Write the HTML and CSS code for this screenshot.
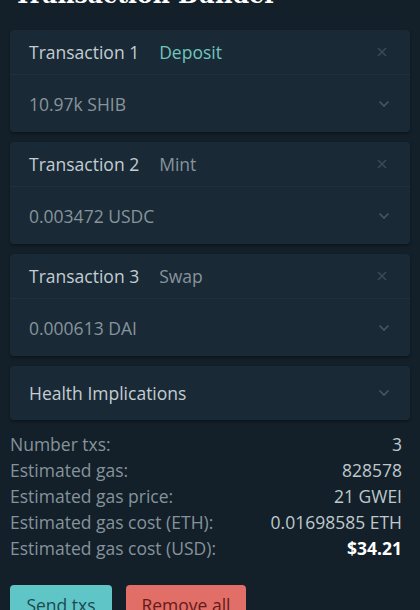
FILE: index.html
```html
<!DOCTYPE html>
<html>
<head>
<meta charset="utf-8">
<link rel="stylesheet" href="styles.css">
</head>
<body>
<div class="page">
  <h1 class="title">Transaction Builder</h1>

  <div class="card">
    <div class="card-head">
      <span class="tx-name">Transaction 1</span>
      <span class="tx-type tx-type-active">Deposit</span>
      <svg class="icon-x" width="12" height="12" viewBox="0 0 12 12"><path d="M2 2L10 10M10 2L2 10" stroke="currentColor" stroke-width="1.6" fill="none"/></svg>
    </div>
    <div class="card-value">
      <span>10.97k SHIB</span>
      <svg class="icon-chev" width="12" height="8" viewBox="0 0 12 8"><path d="M1.5 1.5L6 6L10.5 1.5" stroke="currentColor" stroke-width="1.6" fill="none"/></svg>
    </div>
  </div>

  <div class="card">
    <div class="card-head">
      <span class="tx-name">Transaction 2</span>
      <span class="tx-type">Mint</span>
      <svg class="icon-x" width="12" height="12" viewBox="0 0 12 12"><path d="M2 2L10 10M10 2L2 10" stroke="currentColor" stroke-width="1.6" fill="none"/></svg>
    </div>
    <div class="card-value">
      <span>0.003472 USDC</span>
      <svg class="icon-chev" width="12" height="8" viewBox="0 0 12 8"><path d="M1.5 1.5L6 6L10.5 1.5" stroke="currentColor" stroke-width="1.6" fill="none"/></svg>
    </div>
  </div>

  <div class="card">
    <div class="card-head">
      <span class="tx-name">Transaction 3</span>
      <span class="tx-type">Swap</span>
      <svg class="icon-x" width="12" height="12" viewBox="0 0 12 12"><path d="M2 2L10 10M10 2L2 10" stroke="currentColor" stroke-width="1.6" fill="none"/></svg>
    </div>
    <div class="card-value">
      <span>0.000613 DAI</span>
      <svg class="icon-chev" width="12" height="8" viewBox="0 0 12 8"><path d="M1.5 1.5L6 6L10.5 1.5" stroke="currentColor" stroke-width="1.6" fill="none"/></svg>
    </div>
  </div>

  <div class="card card-health">
    <span class="tx-name">Health Implications</span>
    <svg class="icon-chev" width="12" height="8" viewBox="0 0 12 8"><path d="M1.5 1.5L6 6L10.5 1.5" stroke="currentColor" stroke-width="1.6" fill="none"/></svg>
  </div>

  <div class="stats">
    <div class="stat"><span>Number txs:</span><span class="val">3</span></div>
    <div class="stat"><span>Estimated gas:</span><span class="val">828578</span></div>
    <div class="stat"><span>Estimated gas price:</span><span class="val">21 GWEI</span></div>
    <div class="stat"><span>Estimated gas cost (ETH):</span><span class="val">0.01698585 ETH</span></div>
    <div class="stat"><span>Estimated gas cost (USD):</span><span class="val val-strong">$34.21</span></div>
  </div>

  <div class="actions">
    <button class="btn btn-send">Send txs</button>
    <button class="btn btn-remove">Remove all</button>
  </div>
</div>
</body>
</html>
```

FILE: styles.css
```css
html, body {
  margin: 0;
  padding: 0;
  background: #13202a;
  height: 100%;
  overflow: hidden;
}

body {
  font-family: "Open Sans", "Noto Sans", sans-serif;
  font-size: 17.5px;
  color: #c3ccd1;
}

.page {
  padding: 0 10px;
}

.title {
  margin: -21px 0 19px 4px;
  font-family: "DejaVu Serif", serif;
  font-weight: bold;
  font-size: 23.5px;
  line-height: 32px;
  color: #ffffff;
  white-space: nowrap;
}

.card {
  background: #192a36;
  border-radius: 4px;
  margin-bottom: 10px;
  box-shadow: 0 2px 3px rgba(0, 0, 0, 0.35);
}

.card-head {
  height: 44px;
  display: flex;
  align-items: center;
  padding: 0 22px 0 19px;
  border-bottom: 1px solid #1f313d;
}

.tx-name {
  color: #c4cdd2;
}

.tx-type {
  margin-left: 20px;
  color: #87949c;
}

.tx-type-active {
  color: #72c4bd;
}

.icon-x {
  margin-left: auto;
  color: #394a55;
}

.card-value {
  height: 57px;
  display: flex;
  align-items: center;
  justify-content: space-between;
  padding: 0 20px 0 19px;
  color: #87949c;
}

.icon-chev {
  color: #45565f;
}

.card-health {
  height: 54px;
  display: flex;
  align-items: center;
  justify-content: space-between;
  padding: 0 20px 0 19px;
}

.stats {
  margin-top: 11px;
  padding-right: 8px;
}

.stat {
  display: flex;
  justify-content: space-between;
  line-height: 26px;
  color: #86939a;
}

.val {
  color: #bfc8cc;
}

.val-strong {
  color: #ffffff;
  font-weight: bold;
}

.actions {
  display: flex;
  gap: 14px;
  margin-top: 24px;
}

.btn {
  font-family: "Open Sans", "Noto Sans", sans-serif;
  font-size: 17.5px;
  height: 40px;
  border: none;
  border-radius: 4px;
  padding: 0 10px;
}

.btn-send {
  background: #60c5c6;
  color: #1c4a51;
  width: 102px;
}

.btn-remove {
  background: #e16f68;
  color: #641a17;
  width: 120px;
}
```
